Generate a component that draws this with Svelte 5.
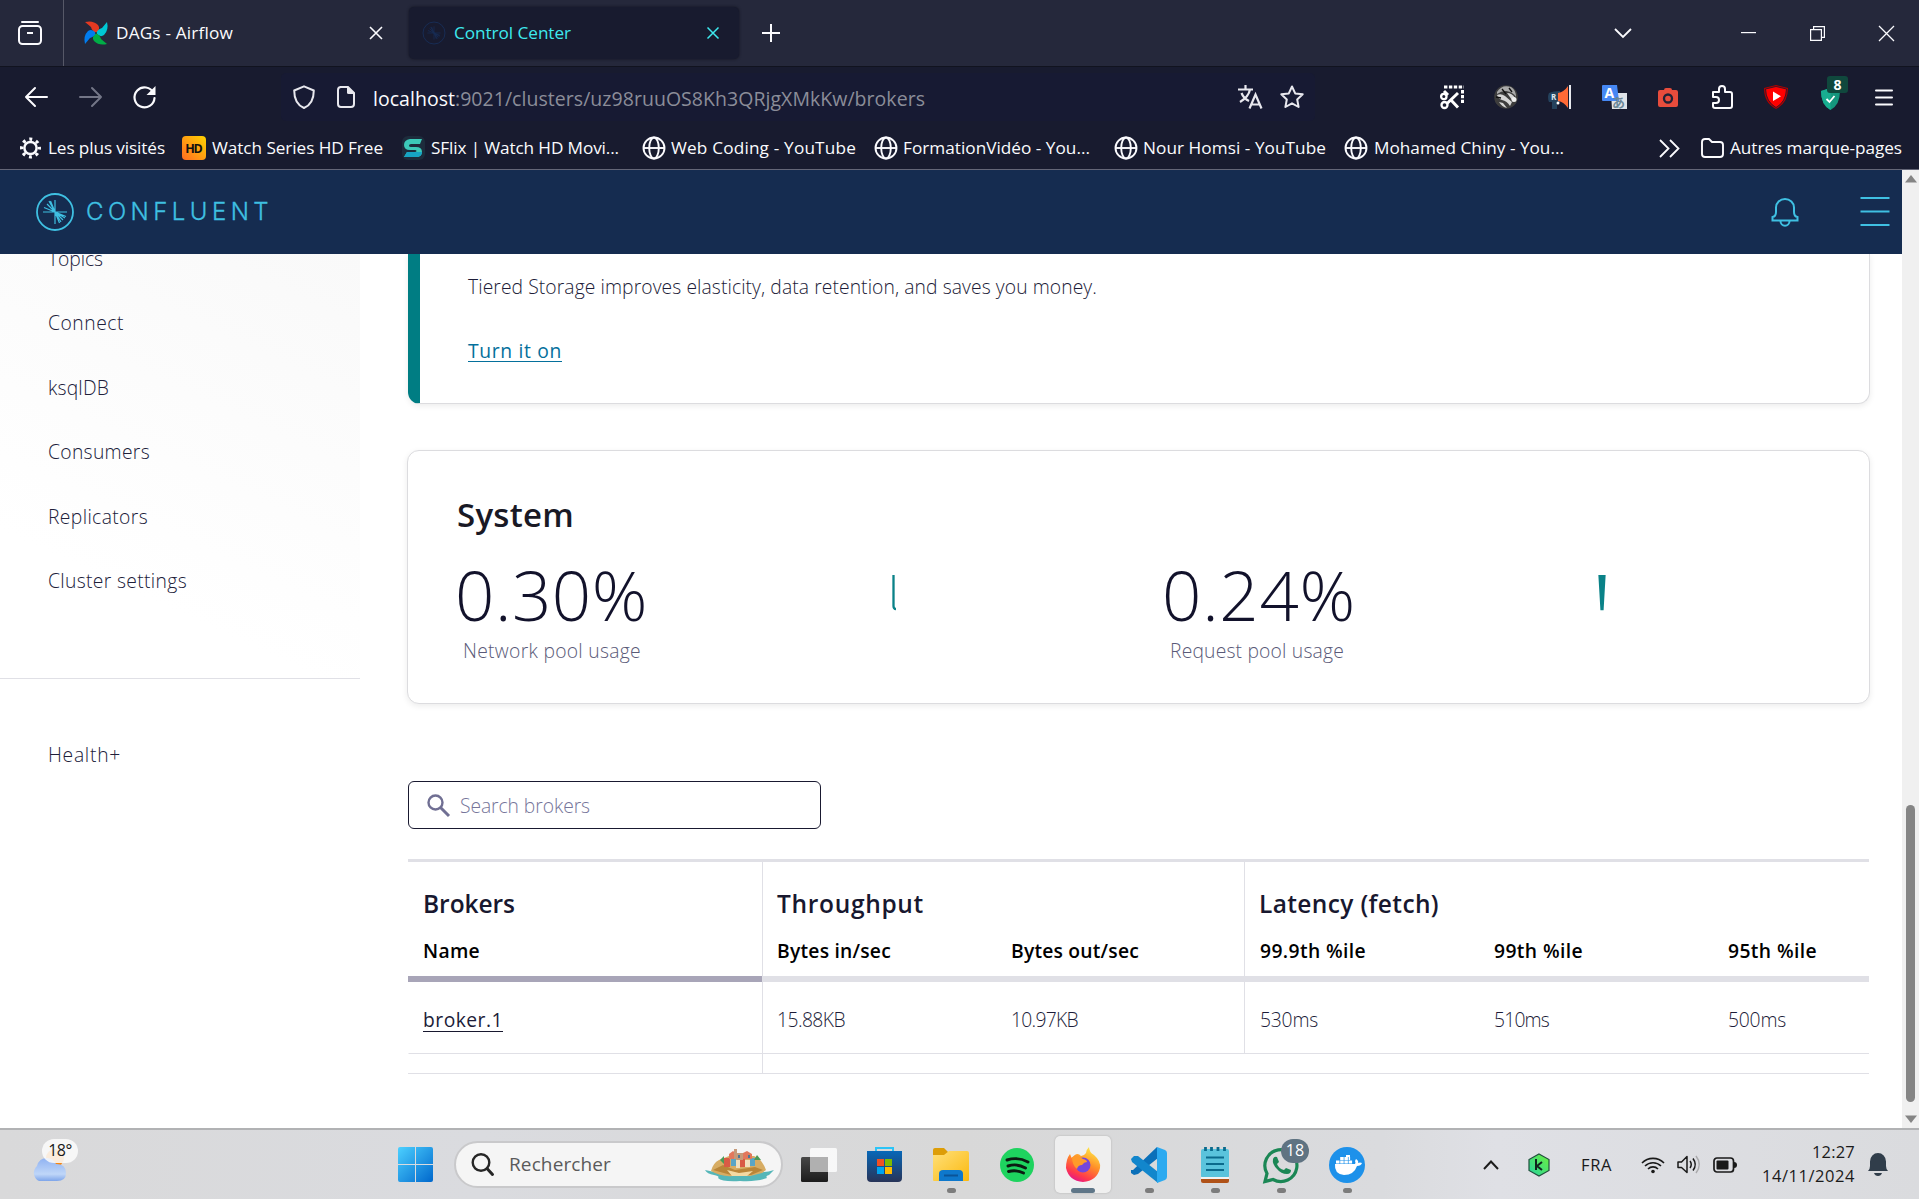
<script>
  // Tracks a label so that it fills exactly the given width.
  function fit(node, width) {
    const natural = node.getBoundingClientRect().width;
    const count = [...node.textContent].length;
    node.style.letterSpacing = (width - natural) / count + 'px';
    node.style.width = width + 'px';
  }

  const sidebar = [
    ['Topics', 55], ['Connect', 76], ['ksqlDB', 61], ['Consumers', 102],
    ['Replicators', 100], ['Cluster settings', 139]
  ];
  const metrics = [
    { value: '0.30%', label: 'Network pool usage', vw: 193, lw: 178, line: 'M2.500 1V32q0 3 2.500 3' },
    { value: '0.24%', label: 'Request pool usage', vw: 194, lw: 174, line: 'M1.500 1L3.500 35H4.500L6.500 1M3.500 1v33M5 1l-.5 33' }
  ];
  const groups = [
    { title: 'Brokers', tw: 92, cols: [{ name: 'Name', nw: 57, value: 'broker.1', w: 80, link: true }] },
    { title: 'Throughput', tw: 147, cols: [
      { name: 'Bytes in/sec', nw: 114, value: '15.88KB', w: 68 },
      { name: 'Bytes out/sec', nw: 128, value: '10.97KB', w: 67 }] },
    { title: 'Latency (fetch)', tw: 180, cols: [
      { name: '99.9th %ile', nw: 106, value: '530ms', w: 58 },
      { name: '99th %ile', nw: 89, value: '510ms', w: 55 },
      { name: '95th %ile', nw: 89, value: '500ms', w: 58 }] }
  ];
</script>

{#snippet globe()}
  <svg width="24" height="24" viewBox="0 0 24 24" fill="none" stroke="#fbfbfe" stroke-width="1.9">
    <circle cx="12" cy="12" r="10.500" /><ellipse cx="12" cy="12" rx="4.800" ry="10.500" /><path d="M1.500 12h21" />
  </svg>
{/snippet}

{#snippet burst()}
  <path d="M0 0V-12M0 0L-4.500-11M0 0L-8-8M0 0L-11-4.500M0 0H-12M0 0L-6-11M0 0V12M0 0L4.500 11M0 0L8 8M0 0L11 4.500M0 0H12M0 0L6 10M0 0L10 6" />
{/snippet}

<div class="screen">
  <div class="chrome">
    <div class="tabs">
      <svg width="24" height="24" viewBox="0 0 24 24" fill="none" stroke="#fbfbfe" stroke-width="2">
        <path d="M4 1h16" stroke-linecap="round" /><rect x="1" y="5" width="22" height="18" rx="3.500" /><path d="M9 12h6" />
      </svg>
      <i class="divider"></i>
      <svg width="24" height="24" viewBox="0 0 24 24">
        <path d="M12 12Q8 10 7 6L1 1Q9-1 14 4Q17 8 12 12Z" fill="#e43921" />
        <path d="M12 12Q14 8 18 7L23 1Q25 9 20 14Q16 17 12 12Z" fill="#00c7d4" />
        <path d="M12 12Q16 14 17 18L23 23Q15 25 10 20Q7 16 12 12Z" fill="#00ad46" />
        <path d="M12 12Q10 16 6 17L1 23Q-1 15 4 10Q8 7 12 12Z" fill="#017cee" />
        <circle cx="12" cy="12" r="1" fill="#333" />
      </svg>
      <span class="ui" use:fit={117}>DAGs - Airflow</span>
      <svg width="14" height="14" viewBox="0 0 14 14" stroke="#fbfbfe" stroke-width="1.6"><path d="M1 1l12 12M13 1L1 13" /></svg>
      <div class="tab-active">
        <svg width="24" height="24" viewBox="-12 -12 24 24" fill="none" stroke="#172c54" stroke-width="1">
          <circle r="11" /><g transform="scale(.55)" stroke-width="1.5">{@render burst()}</g>
        </svg>
        <span class="ui cyan" use:fit={117}>Control Center</span>
        <svg width="14" height="14" viewBox="0 0 14 14" stroke="#3ee9ee" stroke-width="1.5"><path d="M1.500 1.500l11 11M12.500 1.500l-11 11" /></svg>
      </div>
      <svg width="20" height="20" viewBox="0 0 20 20" stroke="#fbfbfe" stroke-width="2"><path d="M10 1v18M1 10h18" /></svg>
      <svg width="18" height="10" viewBox="0 0 18 10" fill="none" stroke="#fbfbfe" stroke-width="1.800"><path d="M1 1l8 8 8-8" /></svg>
      <svg width="15" height="2" viewBox="0 0 15 2"><path d="M0 0h15v1.200H0z" fill="#fbfbfe" /></svg>
      <svg width="15" height="15" viewBox="0 0 15 15" fill="none" stroke="#fbfbfe" stroke-width="1.2"><path d="M.6 3.600h10.800v10.800H.6zM3.600 3.400V.6h10.800v10.800h-2.800" /></svg>
      <svg width="17" height="17" viewBox="0 0 17 17" stroke="#fbfbfe" stroke-width="1.3"><path d="M1 1l15 15M16 1L1 16" /></svg>
    </div>

    <div class="toolbar">
      <svg width="23" height="22" viewBox="0 0 23 22" fill="none" stroke="#fbfbfe" stroke-width="2"><path d="M10 2l-9 9 9 9M1 11h21" stroke-linecap="round" stroke-linejoin="round" /></svg>
      <svg width="23" height="22" viewBox="0 0 23 22" fill="none" stroke="#737687" stroke-width="2"><path d="M13 2l9 9-9 9M22 11H1" stroke-linecap="round" stroke-linejoin="round" /></svg>
      <svg width="23" height="23" viewBox="0 0 23 23" fill="none" stroke="#fbfbfe" stroke-width="2.200"><path d="M20.500 7A10 10 0 1 0 21.500 12" stroke-linecap="round" /><path d="M22.500 0v9h-9z" fill="#fbfbfe" stroke="none" /></svg>
      <div class="urlbar">
        <svg width="22" height="24" viewBox="0 0 22 24" fill="none" stroke="#e8e8ee" stroke-width="2" stroke-linejoin="round"><path d="M11 1.300L20.800 5.500C20.800 14 18 20 11 23C4 20 1.200 14 1.200 5.500Z" /></svg>
        <svg width="18" height="22" viewBox="0 0 18 22"><path d="M3 1h8l6 6v11a3 3 0 0 1-3 3H4a3 3 0 0 1-3-3V4a3 3 0 0 1 3-3z" fill="none" stroke="#e8e8ee" stroke-width="2" /><path d="M10 0l8 8h-6.500q-1.500 0-1.500-1.500z" fill="#e8e8ee" /></svg>
        <div class="url"><span class="host" use:fit={82}>localhost</span><span class="path" use:fit={470}>:9021/clusters/uz98ruuOS8Kh3QRjgXMkKw/brokers</span></div>
        <svg width="24" height="24" viewBox="0 0 24 24" fill="none" stroke="#e8e8ee" stroke-width="2.200"><path d="M0 4.500h15M7.500 0v4M12 4.500C11 10 7 14 2 17M3.500 8C5 12 8 14.500 11 16" /><path d="M11.500 23.500L17.500 9.500L23.500 23.500M13.500 19.500h8" /></svg>
        <svg width="24" height="24" viewBox="0 0 24 24" fill="none" stroke="#e8e8ee" stroke-width="2" stroke-linejoin="round"><path d="M12 1.500l3.200 6.900 7.500.9-5.500 5.200 1.400 7.500-6.600-3.700L5.400 22l1.400-7.500L1.300 9.300l7.500-.9z" /></svg>
      </div>
      <svg width="24" height="24" viewBox="0 0 24 24" fill="none" stroke="#fff" stroke-width="2.300"><path d="M4 2h20" stroke-dasharray="3.400 1.500" stroke-width="3" /><path d="M22.500 5v13" stroke-dasharray="3.400 1.500" stroke-width="3" /><path d="M4 6l4 4M18 8L7 18.500M10 14l8 8.500" stroke-width="3" /><circle cx="3.800" cy="11.500" r="2.700" /><circle cx="4.500" cy="20" r="3" /></svg>
      <svg width="24" height="24" viewBox="0 0 24 24"><circle cx="12" cy="12" r="11.800" fill="#3d3d3d" /><path d="M3 7Q8-1 17 2Q22 5 22 12Q19 7 12 6Q7 6 3 9Z" fill="#a9a9a9" /><path d="M3 10q4-2 8 1l7 6-2 4q-3-5-8-6-4-1-5-5zM13 8q5 0 8 5l-3 2zM5 17l4 1 4 5q-5-1-8-6z" fill="#d6d6d6" /><path d="M8 4l4 5M15 3l3 4M2 12l5 1" stroke="#111" stroke-width="1.300" fill="none" /><circle cx="20" cy="14.500" r="2.500" fill="#eee" /></svg>
      <svg width="24" height="24" viewBox="0 0 24 24"><path d="M1 8Q5 6 12 6v11H9v7H4v-7H1q-2-5 0-9z" fill="#24425d" /><path d="M10 8Q16 7 20 1v22q-4-6-10-7z" fill="#ff6a36" /><path d="M22 0v24" stroke="#e7e9ee" stroke-width="2" /><circle cx="10" cy="18" r="1.500" fill="#fff" /><text x="3" y="15" font-family="Open Sans, sans-serif" font-size="8" font-weight="700" fill="#dce6ef">R</text></svg>
      <svg width="25" height="24" viewBox="0 0 25 24"><path d="M9 8h16v16H10z" fill="#dfe3e8" /><path d="M0 1q0-1 1-1h14l2 16H1q-1 0-1-1z" fill="#4688f4" /><text x="2.500" y="13" font-family="Open Sans, sans-serif" font-size="14" font-weight="700" fill="#fff">A</text><text x="10" y="22" font-family="Noto Sans CJK JP, sans-serif" font-size="13" font-weight="700" fill="#6b8797">あ</text></svg>
      <svg width="20" height="19" viewBox="0 0 20 19"><path d="M6 2q0-2 2-2h4q2 0 2 2h4q2 0 2 2v13q0 2-2 2H2q-2 0-2-2V4q0-2 2-2z" fill="#e74c3c" /><circle cx="10" cy="10.500" r="4" fill="none" stroke="#202236" stroke-width="2.300" /></svg>
      <svg width="21" height="24" viewBox="0 0 21 24" fill="none" stroke="#fbfbfe" stroke-width="2" stroke-linejoin="round"><path d="M7 7V4a3 3 0 0 1 6 0v3h5q2 0 2 2v12q0 2-2 2H3q-2 0-2-2v-3h3a3 3 0 0 0 0-6H1V7z" /></svg>
      <svg width="24" height="24" viewBox="0 0 24 24"><path d="M12 0L24 3Q24 18 12 24Q0 18 0 3z" fill="#b20000" /><path d="M12 1.500L22.500 4Q22 17 12 22.500Q2 17 1.500 4z" fill="#f00" stroke="#181b2f" stroke-width=".8" /><path d="M9 6.500l8 4.800-8 4.800z" fill="#fff" /></svg>
      <div class="guard">
        <svg width="19" height="22" viewBox="0 0 19 22"><path d="M9.500 0L19 3Q19 17 9.500 22Q0 17 0 3z" fill="#15967d" /><path d="M9.500 0v22Q0 17 0 3z" fill="#18ae90" /><path d="M5.500 11l3 3 5-6" fill="none" stroke="#fff" stroke-width="1.800" /></svg>
        <b>8</b>
      </div>
      <svg width="18" height="17" viewBox="0 0 18 17" stroke="#fbfbfe" stroke-width="2" stroke-linecap="round"><path d="M1 1.500h16M1 8.500h16M1 15.500h16" /></svg>
    </div>

    <div class="bookmarks">
      <svg width="21" height="22" viewBox="-11 -11 22 22" fill="none" stroke="#fbfbfe"><circle r="6.400" stroke-width="2.600" /><circle r="9.300" stroke-width="3.400" stroke-dasharray="3.100 4.204" stroke-dashoffset="1.550" /></svg>
      <span class="ui" use:fit={117}>Les plus visités</span>
      <svg width="24" height="24" viewBox="0 0 24 24"><defs><linearGradient id="hd" x1="0" y1="1" x2="1" y2="0"><stop stop-color="#ff6b22" /><stop offset="1" stop-color="#ffd400" /></linearGradient></defs><rect width="24" height="24" rx="4" fill="url(#hd)" /><text x="3.200" y="16.800" font-family="Open Sans, sans-serif" font-size="12.500" font-weight="700" textLength="17.500" fill="#111">HD</text></svg>
      <span class="ui" use:fit={171}>Watch Series HD Free</span>
      <svg width="23" height="24" viewBox="0 0 23 24"><rect width="23" height="24" rx="6" fill="#1d2c3c" /><path d="M20 3l-2 5H9q-2 0-2 1.500T9 11h5q6 0 6 5t-6 5H2l3-5h8q1.500 0 1.500-1T13 14H8q-6 0-6-5t6-6z" fill="#3cc9b8" /><path d="M5 16h9l6 0q0 5-6 5H2z" fill="#16a4c4" /></svg>
      <span class="ui" use:fit={188}>SFlix | Watch HD Movi...</span>
      {@render globe()}
      <span class="ui" use:fit={185}>Web Coding - YouTube</span>
      {@render globe()}
      <span class="ui" use:fit={187}>FormationVidéo - You...</span>
      {@render globe()}
      <span class="ui" use:fit={183}>Nour Homsi - YouTube</span>
      {@render globe()}
      <span class="ui" use:fit={190}>Mohamed Chiny - You...</span>
      <svg width="21" height="19" viewBox="0 0 21 19" fill="none" stroke="#fbfbfe" stroke-width="1.800"><path d="M1 1l8.500 8.500L1 18M11 1l8.500 8.500L11 18" /></svg>
      <svg width="23" height="20" viewBox="0 0 23 20" fill="none" stroke="#fbfbfe" stroke-width="1.900" stroke-linejoin="round"><path d="M1 4q0-3 3-3h4l3 3h8q3 0 3 3v9q0 3-3 3H4q-3 0-3-3z" /></svg>
      <span class="ui" use:fit={172}>Autres marque-pages</span>
    </div>
  </div>

  <div class="viewport">
    <div class="page">
      <header>
        <svg width="38" height="38" viewBox="-19 -19 38 38" fill="none" stroke="#3fc0e2" stroke-width="1.800"><circle r="18" /><g stroke-width="1.200">{@render burst()}</g></svg>
        <span class="brand" use:fit={187}>CONFLUENT</span>
        <svg class="bell" width="28" height="29" viewBox="0 0 28 29" fill="none" stroke="#3fc0e2" stroke-width="2"><path d="M1.500 22.500v-3.500q3.500-.5 3.500-5V9.500a9 8.500 0 0 1 18 0V14q0 4.500 3.500 5v3.500z" /><path d="M9.500 23a4.500 4.800 0 0 0 9 0" /></svg>
        <svg width="30" height="29" viewBox="0 0 30 29" stroke="#3fc0e2" stroke-width="2"><path d="M.5 1h29M.5 14.500h29M.5 28h29" /></svg>
      </header>
      <div class="body">
        <nav>
          <div class="menu">
            {#each sidebar as [label, w]}
              <a href="#top"><span use:fit={w}>{label}</span></a>
            {/each}
          </div>
          <a href="#top" class="health"><span use:fit={73}>Health+</span></a>
        </nav>
        <main>
          <section class="tiered">
            <p><span use:fit={629}>Tiered Storage improves elasticity, data retention, and saves you money.</span></p>
            <p><a href="#top" class="turn" use:fit={94}>Turn it on</a></p>
          </section>
          <section class="system">
            <h2><span use:fit={117}>System</span></h2>
            <div class="metrics">
              {#each metrics as m}
                <div class="metric">
                  <div class="figures">
                    <div class="value"><span use:fit={m.vw}>{m.value}</span></div>
                    <div class="label"><span use:fit={m.lw}>{m.label}</span></div>
                  </div>
                  <svg width="8" height="36" viewBox="0 0 8 36" fill="none" stroke="#0a8288" stroke-width="2.300"><path d={m.line} /></svg>
                </div>
              {/each}
            </div>
          </section>
          <div class="search">
            <svg width="23" height="23" viewBox="0 0 23 23" fill="none" stroke="#706f93"><circle cx="8.500" cy="8.500" r="7" stroke-width="2.400" /><path d="M13.500 13.500l8.500 8.500" stroke-width="3" /></svg>
            <span use:fit={130}>Search brokers</span>
          </div>
          <div class="table">
            {#each groups as g}
              <div class="group">
                <div class="head">
                  <h3><span use:fit={g.tw}>{g.title}</span></h3>
                  <div class="cols">
                    {#each g.cols as c}<div class="col name"><span use:fit={c.nw}>{c.name}</span></div>{/each}
                  </div>
                </div>
                <div class="cols row">
                  {#each g.cols as c}<div class="col" class:link={c.link}><span use:fit={c.w}>{c.value}</span></div>{/each}
                </div>
                <div class="foot"></div>
              </div>
            {/each}
          </div>
        </main>
      </div>
    </div>
    <div class="scrollbar">
      <svg width="12" height="8" viewBox="0 0 12 8"><path d="M6 0l6 7.500H0z" fill="#858585" /></svg>
      <i></i>
      <svg width="12" height="8" viewBox="0 0 12 8"><path d="M6 8L0 .5h12z" fill="#858585" /></svg>
    </div>
  </div>

  <div class="taskbar">
    <div class="weather">
      <svg width="37" height="36" viewBox="0 0 37 36"><defs><linearGradient id="cl" x1="0" y1="0" x2="0" y2="1"><stop stop-color="#8fb2f2" /><stop offset=".7" stop-color="#bfd6f8" /><stop offset="1" stop-color="#7ea5ea" /></linearGradient></defs><circle cx="25" cy="12" r="9" fill="#f7850f" /><path d="M9 35A9 9 0 0 1 7 20Q9 12 17 12Q23 12 26 18Q36 18 36 27Q36 35 27 35Z" fill="url(#cl)" /></svg>
      <span>18°</span>
    </div>
    <svg width="35" height="35" viewBox="0 0 35 35"><defs><linearGradient id="win" x1="0" y1="0" x2="1" y2="1"><stop stop-color="#4cd0ff" /><stop offset="1" stop-color="#0067cc" /></linearGradient></defs><path d="M2 0h15v17H0V2q0-2 2-2zM18 0h15q2 0 2 2v15H18zM0 18h17v17H2q-2 0-2-2zM18 18h17v15q0 2-2 2H18z" fill="url(#win)" /></svg>
    <div class="find">
      <svg width="23" height="23" viewBox="0 0 23 23" fill="none" stroke="#262626" stroke-width="2.400" stroke-linecap="round"><circle cx="10" cy="9.500" r="8.300" /><path d="M16 15.500l5.500 6" stroke-width="3" /></svg>
      <span use:fit={102}>Rechercher</span>
      <svg width="70" height="34" viewBox="0 0 70 34">
        <path d="M0 22q12 3 20 2h30q12 1 19-2l-5 5q-4 1-2 3-10 4-27 3-18 1-22-3 2-2-4-3-7-1-9-5z" fill="#55b6b8" />
        <path d="M6 23q2-8 8-11l10-4h25q8 3 12 14l-4 3-12 3q-12-1-17 0-12 1-22-5z" fill="#d7ac63" />
        <path d="M8 22l10-5 12 5 20-3 8 3-12 5H26z" fill="#b98538" /><path d="M22 22l12 3 14-2-6 5H27z" fill="#f3d9a2" />
        <path d="M19 10h6v9h-6zM35 11h5v8h-5z" fill="#d95a45" /><path d="M26 11h5v7h-5zM45 10h5v8h-5z" fill="#5aa5c5" /><path d="M31 12h4v8h-4zM40 12h5v7h-5z" fill="#f1dfbd" />
        <path d="M24 6l4-3 4 3v5h-8zM38 5l4-2 5 3v5h-9z" fill="#e2785c" /><path d="M29 1h3v10h-3zM32 5h6v7h-6z" fill="#c69a79" /><path d="M33 7h2v3h-2zM43 7h2v3h-2z" fill="#4a7897" /><path d="M15 12l4-4v8zM49 12l3-5 4 5z" fill="#4b9a57" />
      </svg>
    </div>
    <svg width="36" height="34" viewBox="0 0 36 34"><defs><linearGradient id="tv" x1="0" y1="0" x2="0" y2="1"><stop stop-color="#474747" /><stop offset="1" stop-color="#1c1c1c" /></linearGradient></defs><rect y="9" width="27" height="25" rx="1.500" fill="url(#tv)" /><rect x="9" y="0" width="27" height="24" rx="1.500" fill="#fff" opacity=".8" /><path d="M9 9h18v15H9z" fill="#b0b0b0" /></svg>
    <svg width="35" height="35" viewBox="0 0 35 35"><defs><linearGradient id="st" x1="0" y1="0" x2="0" y2="1"><stop stop-color="#0868b8" /><stop offset="1" stop-color="#283458" /></linearGradient></defs><path d="M9 7V1h17v6" fill="none" stroke="#2cc4f7" stroke-width="2" /><path d="M0 4h35v27q0 4-4 4H4q-4 0-4-4z" fill="url(#st)" /><path d="M10 12h7v7h-7z" fill="#f25022" /><path d="M18 12h7v7h-7z" fill="#7fba00" /><path d="M10 20h7v7h-7z" fill="#00a4ef" /><path d="M18 20h7v7h-7z" fill="#ffb900" /></svg>
    <div class="app">
      <svg width="36" height="34" viewBox="0 0 36 34"><defs><linearGradient id="fo" x1="0" y1="0" x2="1" y2="1"><stop stop-color="#ffe07a" /><stop offset="1" stop-color="#fbb90f" /></linearGradient></defs><path d="M0 2q0-2 2-2h9l4 4v6H0z" fill="#dd9d07" /><path d="M0 7l11 0 5-4h18q2 0 2 2v27q0 1-1 1H1q-1 0-1-1z" fill="url(#fo)" /><path d="M6 33v-7q0-4 4-4h16q4 0 4 4v7z" fill="#0e78cc" /><path d="M11 27.500h14" stroke="#0a5498" stroke-width="2" /></svg>
      <i></i>
    </div>
    <svg width="34" height="34" viewBox="0 0 34 34"><circle cx="17" cy="17" r="17" fill="#1ed35f" /><path d="M7 12q11-3.500 21 2M8 18q9-3 17.500 2M8.500 23.500q8-2 15 1.500" fill="none" stroke="#0c1b12" stroke-width="2.900" stroke-linecap="round" /></svg>
    <div class="app current">
      <svg width="34" height="35" viewBox="0 0 34 35"><defs><linearGradient id="ff" x1=".8" y1="0" x2=".3" y2="1"><stop stop-color="#fff04a" /><stop offset=".45" stop-color="#ff9028" /><stop offset=".8" stop-color="#ff3a4b" /><stop offset="1" stop-color="#e2158c" /></linearGradient></defs><path d="M4 7q1 3 2 4Q11 4 15 9Q18 9 20 6Q20 3 23 0Q23 5 28 8Q35 14 34 21Q31 34 17 35Q3 34 0 21Q0 12 4 7Z" fill="url(#ff)" /><circle cx="17" cy="18" r="7.500" fill="#7546db" /><path d="M6 10q7-2 11 2 4 1 4 3-3 0-5 3-4 0-5 4-5-4-5-12z" fill="#ff9a2a" /></svg>
      <i></i>
    </div>
    <div class="app">
      <svg width="36" height="36" viewBox="0 0 36 36"><path d="M26 0L2 23l-2 0v3l3 2 4-1L27 11z" fill="#0b70b9" /><path d="M0 12l3-3 4 0 20 16v11L1 15z" fill="#1286cc" /><path d="M26 0l8 3q2 1 2 3v24q0 2-2 3l-8 3z" fill="#2caaf0" /></svg>
      <i></i>
    </div>
    <div class="app notes">
      <svg width="28" height="36" viewBox="0 0 28 36"><rect y="2" width="28" height="29" rx="2" fill="#5ac3dc" /><path d="M0 30h28v2H0z" fill="#f3f3f3" /><path d="M0 32h28v2q0 2-2 2H2q-2 0-2-2z" fill="#b05218" /><path d="M5 10.500h18M5 17h18M5 23h18" stroke="#0b6a8c" stroke-width="1.800" /><path d="M4.500 0v4M10.500 0v4M17 0v4M23.500 0v4" stroke="#0b6a8c" stroke-width="2.800" /></svg>
      <i></i>
    </div>
    <div class="app">
      <svg width="36" height="36" viewBox="0 0 36 36"><path d="M2 34.500l2-8A16 16 0 1 1 10 32.500z" fill="none" stroke="#1b8755" stroke-width="3.200" /><path d="M10 12q1-3 4-2l2 5-2 2q2 5 7 6l2-2 5 2q0 4-4 4-6 0-10-5-5-5-4-10z" fill="#1b8755" /></svg>
      <b>18</b>
      <i></i>
    </div>
    <div class="app">
      <svg width="36" height="36" viewBox="0 0 36 36"><circle cx="18" cy="18" r="18" fill="#1d91ea" /><path d="M6 17h20q1-1 0-3l1-2q3 2 2 4 2-1 4 0-1 3-5 3-3 9-13 9-10-1-9-11z" fill="#fff" /><path d="M7 13.500h3.500v3H7zM11.200 13.500h3.500v3h-3.500zM15.400 13.500h3.500v3h-3.500zM19.600 13.500h3.500v3h-3.500zM11.200 10h3.500v3h-3.500zM15.400 10h3.500v3h-3.500zM19.600 10h1.500v3h-1.500zM17 8h4v2h-4z" fill="#fff" /></svg>
      <i></i>
    </div>
    <svg width="16" height="10" viewBox="0 0 16 10" fill="none" stroke="#1c1c1c" stroke-width="2"><path d="M1 9l7-7.500L15 9" /></svg>
    <svg width="22" height="24" viewBox="0 0 22 24"><defs><linearGradient id="ka" x1="0" y1="1" x2="1" y2="0"><stop stop-color="#25d3a0" /><stop offset="1" stop-color="#6ef03c" /></linearGradient></defs><path d="M11 1l10 5.500v11L11 23 1 17.500v-11z" fill="url(#ka)" stroke="#20503c" stroke-width="1.200" /><path d="M8 6v11M14 9l-5 4 5 4" fill="none" stroke="#10241e" stroke-width="2" /></svg>
    <span class="lang" use:fit={31}>FRA</span>
    <svg width="24" height="18" viewBox="0 0 24 18" fill="none" stroke="#1a1a1a" stroke-width="1.600"><path d="M1 7a15.500 15.500 0 0 1 22 0M4 10a11.300 11.300 0 0 1 16 0M7 13a7 7 0 0 1 10 0" /><circle cx="12" cy="15.500" r="1.800" fill="#1a1a1a" stroke="none" /></svg>
    <svg width="24" height="19" viewBox="0 0 24 19" fill="none" stroke="#1a1a1a" stroke-width="1.500" stroke-linejoin="round"><path d="M1 7h3.500L10 1.500v16L4.500 12.500H1z" /><path d="M13 6q2.500 3.500 0 7M16 3.500q4.500 6 0 12" /><path d="M19 1q6.500 8.500 0 17" stroke="#a9a9ab" /></svg>
    <svg width="24" height="16" viewBox="0 0 24 16"><rect x="1" y="1" width="19.500" height="14" rx="3" fill="none" stroke="#1a1a1a" stroke-width="1.700" /><rect x="3.500" y="3.500" width="12" height="9" rx="1" fill="#1a1a1a" /><path d="M21 5q3 0 3 3t-3 3z" fill="#1a1a1a" /></svg>
    <div class="clock"><span use:fit={43}>12:27</span><span use:fit={93}>14/11/2024</span></div>
    <svg width="20" height="24" viewBox="0 0 20 24" fill="#303d4a"><path d="M0 18q2-2 2-5V8.500a8 8.500 0 0 1 16 0V13q0 3 2 5z" /><path d="M6 20h8q-1 3-4 3t-4-3z" /></svg>
  </div>
</div>

<style>
  :global(body) { overflow: hidden; }
  .screen, .screen :global(*) { box-sizing: border-box; }
  .screen { width: 1919px; height: 1199px; display: flex; flex-direction: column; font-family: 'Open Sans', 'Noto Sans', sans-serif; background: #fff; overflow: hidden; }
  svg { display: block; flex: none; overflow: visible; }
  span { display: inline-block; white-space: nowrap; flex: none; }
  a { color: inherit; text-decoration: none; }
  p, h2, h3 { margin: 0; }

  .chrome { height: 170px; background: #181b2f; border-bottom: 1px solid #646677; }
  .ui { font-size: 17.2px; line-height: 24px; color: #fbfbfe; }
  .cyan { color: #3ee9ee; }
  .tabs { height: 67px; background: #25283b; border-bottom: 1px solid #11131f; display: grid; align-items: center; justify-items: start; padding-left: 18px;
    grid-template-columns: 45px 21px 32px 253px 40px 352px 853px 127px 69px 68px 41px; }
  .divider { width: 1px; height: 66px; background: #565867; }
  .tab-active { width: 330px; height: 52px; border-radius: 5px; background: #181b2f; box-shadow: 0 0 3px #11131f; display: flex; align-items: center; padding-left: 13px; }
  .tab-active .cyan { margin-left: 8px; margin-right: 135px; }

  .toolbar { height: 60px; display: grid; align-items: center; justify-items: start; padding-left: 25px;
    grid-template-columns: 54px 54px 148px 1159px 54px 54px 54px 56px 54px 52px 57px 54px 44px; }
  .urlbar { width: 1034px; height: 48px; border-radius: 5px; background: #171a33; display: grid; align-items: center; justify-items: start; padding-left: 12px;
    grid-template-columns: 44px 36px 865px 42px 34px; }
  .url { font-size: 19.5px; line-height: 28px; display: flex; padding-top: 3px; }
  .host { color: #fbfbfe; }
  .path { color: #8b8d99; }
  .guard { position: relative; padding-top: 3px; }
  .guard b { position: absolute; left: 6px; top: -9px; width: 21px; height: 17px; border-radius: 3px; background: #10483d; color: #fff; font-size: 14px; line-height: 17px; text-align: center; }

  .bookmarks { height: 42px; display: grid; align-items: center; justify-items: start; padding-left: 20px;
    grid-template-columns: 28px 134px 30px 190px 29px 211px 29px 203px 29px 211px 29px 201px 30px 285px 42px 29px 172px; }

  .viewport { height: 958px; display: flex; }
  .page { width: 1902px; display: flex; flex-direction: column; }
  header { height: 84px; flex: none; background: #152c50; display: flex; align-items: center; padding: 0 12px 1px 36px; }
  .brand { font-family: Inter, sans-serif; font-weight: 300; font-size: 24px; color: #3fc0e2; margin-left: 12px; line-height: 30px; padding-top: 1px; -webkit-text-stroke: .3px #3fc0e2; }
  .bell { margin: 2px 61px 0 auto; }
  .body { flex: 1; display: flex; overflow: hidden; }

  nav { width: 360px; font-size: 19.3px; font-weight: 300; color: #20203a; line-height: 66px; }
  nav a { display: block; padding-left: 48px; height: 64.4px; }
  .menu { height: 425px; border-bottom: 1px solid #e0e0e6; background: linear-gradient(205deg, #f9f9f9, #fff 75%); overflow: hidden; }
  .menu a:first-child { margin-top: -28px; }
  .health { margin-top: 43px; }

  main { width: 1461px; margin-left: 48px; font-size: 19.3px; font-weight: 300; color: #1c1c38; }
  section { border: 1px solid #dcdcdf; background: #fff; }
  .tiered { width: 1462px; height: 150px; border-top: 0; border-left: 12px solid #007d83; border-radius: 0 0 12px 12px; padding: 1px 0 0 48px; box-shadow: 0 2px 6px rgba(0, 0, 0, .08); line-height: 64px; }
  .turn { display: inline-block; font-weight: 400; color: #04709c; line-height: 25px; height: 24px; border-bottom: 1px solid #04709c; white-space: nowrap; }
  .system { width: 1463px; height: 254px; margin: 46px 0 77px -1px; border-radius: 12px; padding: 39px 0 0 49px; box-shadow: 0 2px 6px rgba(0, 0, 0, .08); }
  h2 { font-size: 33px; font-weight: 600; line-height: 50px; color: #191925; }
  .metrics { display: grid; grid-template-columns: 707px 600px; padding-top: 19px; }
  .metric { display: flex; }
  .figures { width: 434px; }
  .value { font-size: 69px; line-height: 70px; color: #12122b; margin-left: -2px; }
  .label { line-height: 44px; padding-left: 6px; color: #5a5a78; }
  .metric svg { margin-top: 15px; }

  .search { width: 413px; height: 48px; border: 1px solid #191930; border-radius: 6px; display: flex; align-items: center; padding-left: 18px; gap: 10px; color: #76759a; margin-bottom: 30px; }
  .search span { line-height: 26px; padding-top: 2px; }

  .table { display: grid; grid-template-columns: 354px 482px 625px; border-top: 3px solid #e0e0e6; border-bottom: 1px solid #e0e0e6; }
  .head { height: 120px; border-bottom: 6px solid #e0e0e6; border-left: 1px solid #e0e0e6; padding-top: 23px; }
  .group:first-child .head { border-bottom-color: #a8a5b8; border-left: 0; padding-left: 1px; }
  .group:first-child .row, .group:first-child .foot, .group:last-child .foot { border-left-color: transparent; }
  h3 { font-size: 24.5px; font-weight: 600; line-height: 38px; padding-left: 14px; color: #18182f; }
  .cols { display: grid; grid-template-columns: 234px 234px 150px; }
  .group:first-child .cols { grid-template-columns: 350px; }
  .col { padding-left: 14px; }
  .group:last-child .col { padding-left: 15px; }
  .name { font-weight: 600; line-height: 56px; color: #000; }
  .row { height: 72px; padding-top: 4px; line-height: 68px; border-left: 1px solid #e0e0e6; border-bottom: 1px solid #e0e0e6; }
  .link span { font-weight: 400; line-height: 25px; height: 25px; border-bottom: 1px solid #18182f; }
  .foot { height: 19px; border-left: 1px solid #e0e0e6; }

  .scrollbar { width: 17px; background: #f0f0f0; display: flex; flex-direction: column; align-items: center; padding: 5px 0; }
  .scrollbar i { width: 9px; height: 297px; margin: 622px 0 13px; border-radius: 5px; background: #858585; flex: none; }

  .taskbar { height: 71px; border-top: 2px solid #b1b2b4; background: linear-gradient(90deg, #d9d9da, #dadbdf 25%, #d8d8d8 50%, #dadbde 72%, #dfe0e5 78%, #dadbde); display: grid; align-items: center; justify-items: start; padding-left: 30px;
    grid-template-columns: 368px 56px 347px 66px 66px 67px 55px 76px 70px 62px 66px 154px 45px 53px 60px 36px 36px 50px 105px 30px; color: #1a1a1a; }
  .weather { position: relative; height: 51px; padding-top: 7px; }
  .weather span { position: absolute; left: 12px; top: 0; width: 36px; height: 24px; border-radius: 12px; background: rgba(250, 250, 250, .88); font-size: 16px; line-height: 22px; text-align: center; letter-spacing: -.5px; }
  .find { width: 329px; height: 47px; border: 2px solid #c9c9cb; border-radius: 24px; background: #f5f5f5; display: flex; align-items: center; padding-left: 15px; }
  .find span { font-size: 19px; line-height: 26px; color: #5a5a5a; margin: 0 94px 1px 15px; }
  .app { position: relative; height: 57px; display: flex; align-items: center; width: 36px; }
  .app i { position: absolute; bottom: 0; left: 14px; width: 9px; height: 5px; border-radius: 3px; background: #7c7c7c; }
  .notes i { left: 10px; }
  .current { width: 56px; border-radius: 5px; background: #efefef; box-shadow: 0 0 2px #aaa; padding-left: 11px; }
  .current i { left: 16px; width: 24px; background: #5f7688; }
  .app b { position: absolute; left: 18px; top: 3px; width: 28px; height: 24px; border-radius: 12px; background: #5f7382; color: #fff; font-weight: 400; font-size: 16px; line-height: 23px; text-align: center; }
  .lang { font-size: 16.500px; line-height: 26px; }
  .clock { width: 92px; display: flex; flex-direction: column; align-items: flex-end; font-size: 16.500px; line-height: 24px; margin-top: -2px; }
</style>
